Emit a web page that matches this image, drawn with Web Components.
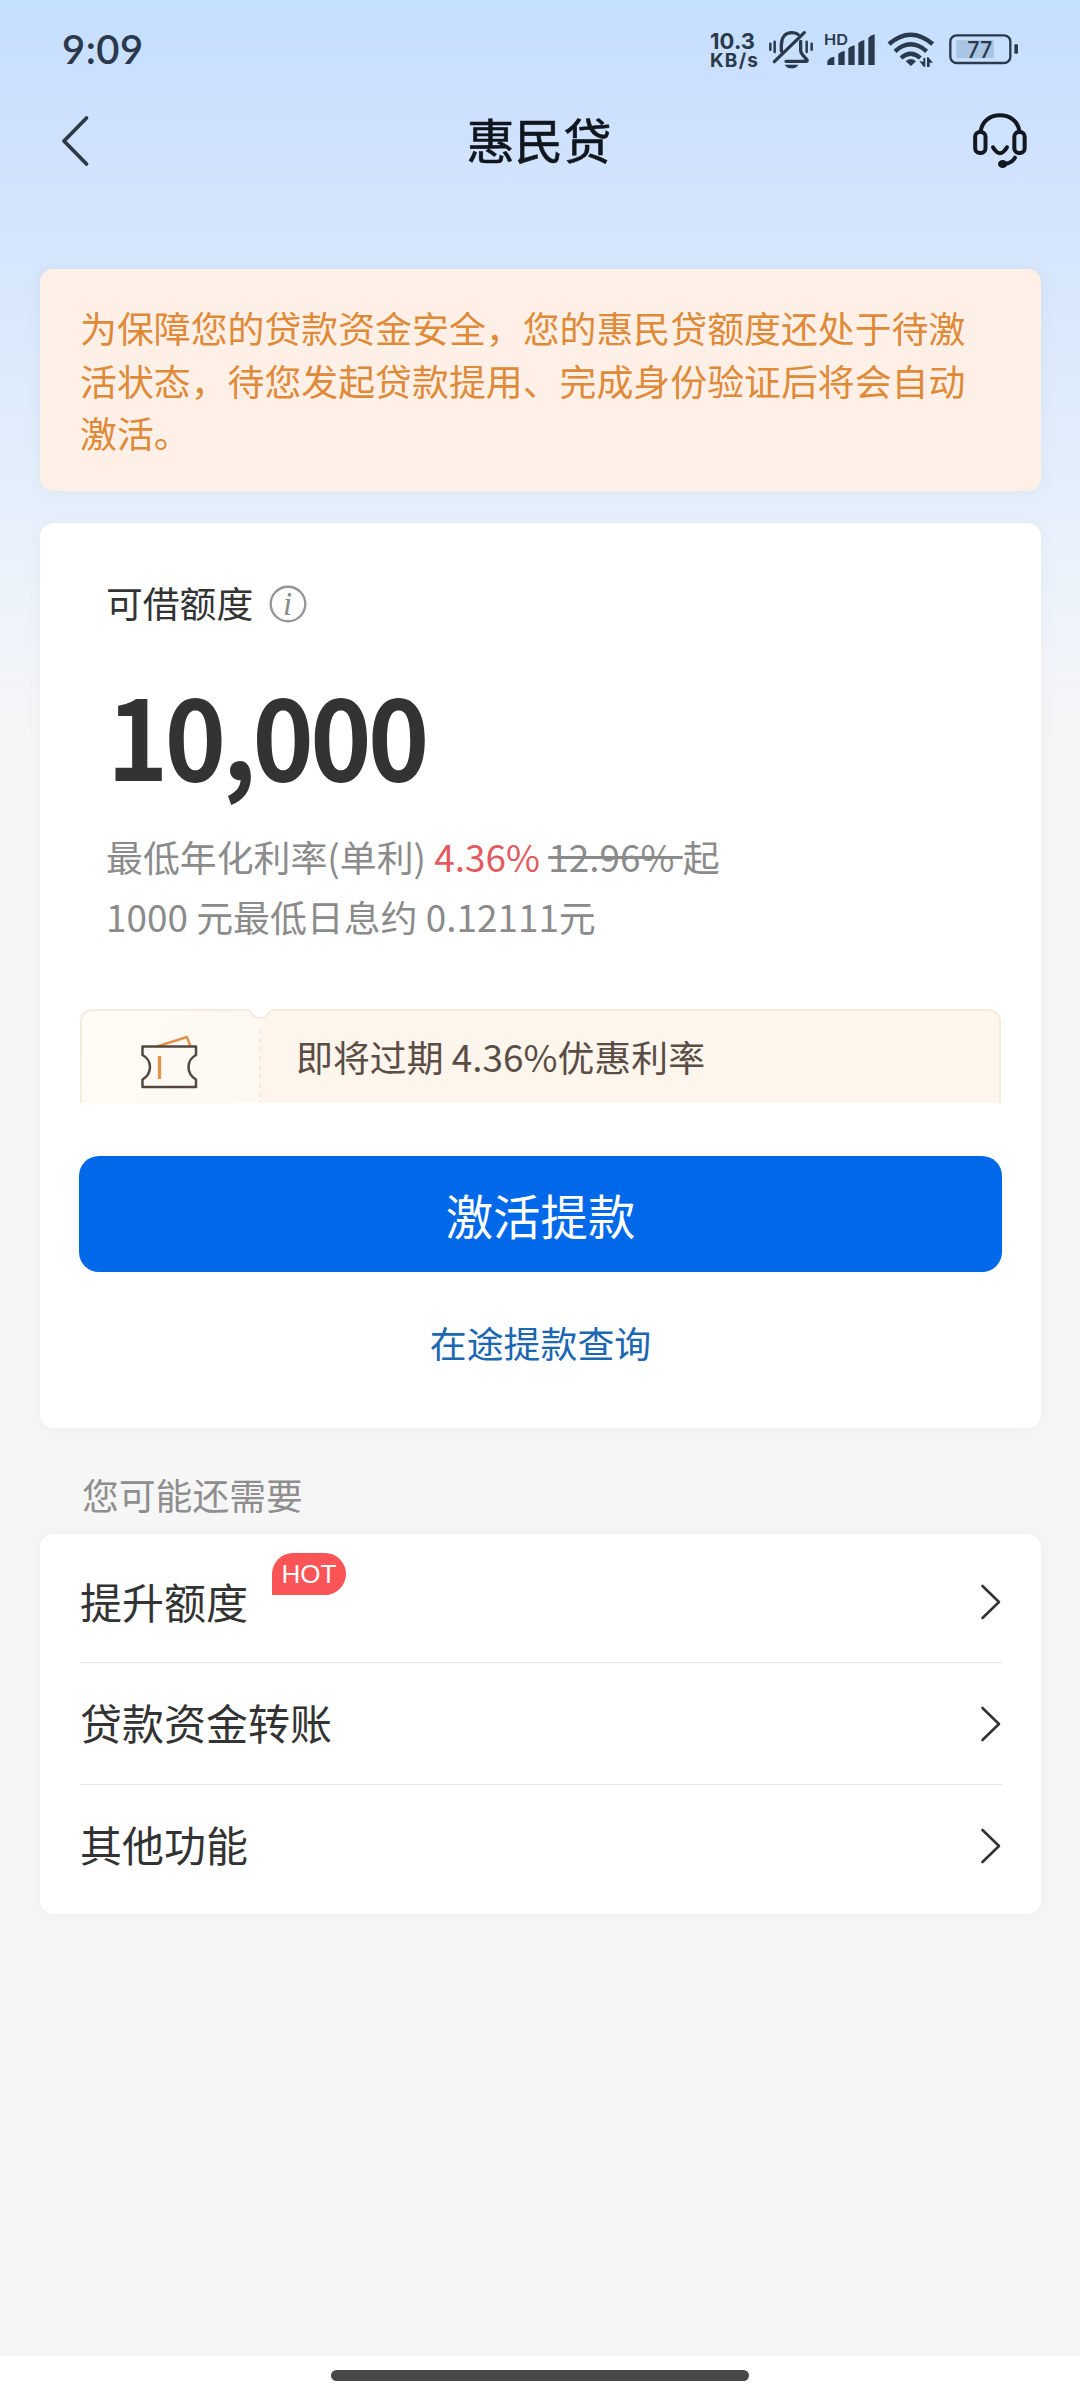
<!DOCTYPE html>
<html lang="zh-CN">
<head>
<meta charset="utf-8">
<meta name="viewport" content="width=device-width">
<title>惠民贷</title>
<style>
html,body{margin:0;padding:0}
body{width:1080px;height:2400px;overflow:hidden;background:#f6f6f6;font-family:"Noto Sans CJK SC","Noto Sans",sans-serif;color:#333}
</style>
</head>
<body>
<loan-page></loan-page>
<script>
const define = (name, html) => customElements.define(name, class extends HTMLElement {
  constructor() {
    super();
    const t = document.createElement('template');
    t.innerHTML = html;
    this.attachShadow({mode: 'open'}).appendChild(t.content.cloneNode(true));
  }
});

define('status-bar', `<style>
:host{display:flex;box-sizing:border-box;height:98px;padding:0 61px 0 62px;justify-content:space-between;align-items:flex-start;color:#2a394b;font-family:Lato,sans-serif}
.time{font-size:40px;line-height:40px;font-weight:600;margin-top:29px;letter-spacing:.5px}
.right{display:flex;align-items:flex-start;margin-top:30px}
.net{width:57px;display:flex;flex-direction:column;font-family:Inter,sans-serif;font-weight:650}
.net span{white-space:nowrap}
.a{font-size:22px;line-height:22px;letter-spacing:.1px}
.b{font-size:19px;line-height:18px;letter-spacing:1.200px}
svg{display:block;flex:none}
text{font-family:Inter,sans-serif}
</style>
<div class="time">9:09</div>
<div class="right">
<div class="net"><span class="a">10.3</span><span class="b">KB/s</span></div>
<svg width="56" height="40" viewBox="261 90 168 120" fill="none" stroke="#2a394b" stroke-width="10" stroke-linecap="round"><path d="M304 153V136C304 110 317 98 335 98q11 0 19 5M362 124v27q0 8 6 14l13 15q2 4-3 4H318M283 185 373 98"/><path d="M314 194h41q-5 11-20 11t-21-11z" fill="#2a394b" stroke="none"/><path stroke-width="7.500" d="M271 131v18M284 125v31M380 125v31M395 131v18"/></svg>
<svg width="62" height="40" viewBox="429 90 186 120" fill="#2a394b"><text x="432" y="134" font-size="44" font-weight="600" textLength="72" lengthAdjust="spacingAndGlyphs">HD</text><path d="M442 195v-12q5-11 21-13v25zM475 195v-34q7-6 19-9v43zM505 195v-50q8-7 19-9v59zM535 195v-66q8-7 18-9v75zM565 195v-82q8-7 19-10v92z"/></svg>
<svg width="60" height="40" viewBox="615 90 180 120" fill="none" stroke="#2a394b" stroke-width="13"><path d="M627 132Q692 76 758 132M645 154Q692 112 740 154M663 174Q692 148 721 174"/><path fill="#2a394b" stroke="none" d="M677 184q15-14 31 0l-15 14zM718 183l13 17h5v-26h-6v11zM741 201v-29h4l14 16h-10v13z"/></svg>
<svg width="74" height="40" viewBox="795 90 222 120"><rect x="811" y="106" width="180" height="83" rx="19" fill="none" stroke="#2a394b" stroke-width="7"/><rect x="829" y="121" width="113" height="54" rx="4" fill="#a9c5e3"/><rect x="1003" y="133" width="11" height="28" rx="3" fill="#2a394b"/><text x="862" y="173" font-size="68" font-weight="500" fill="#2a394b" textLength="75" lengthAdjust="spacingAndGlyphs">77</text></svg>
</div>`);

define('nav-bar', `<style>
:host{display:flex;height:86px;padding:0 49px 0 59px;justify-content:space-between;align-items:center}
.t{font-size:48.300px;line-height:70px;font-weight:400;-webkit-text-stroke:.6px #10161d;color:#10161d;margin:-7px 12px 0 0}
.side{width:60px;display:flex}
.r{justify-content:flex-end}
svg{display:block}
</style>
<div class="side"><svg width="34" height="54" viewBox="0 0 34 54" fill="none" stroke="#2c3a45" stroke-width="3.800" stroke-linecap="round"><path d="M27.500 4 5 27 27.500 50" stroke-linejoin="round"/></svg></div>
<div class="t">惠民贷</div>
<div class="side r"><svg width="60" height="60" viewBox="875 331 180 180" fill="none" stroke="#111820" stroke-width="12" stroke-linecap="round"><path d="M904 390C910 359 934 344 962 344s52 15 58 46"/><rect x="887.500" y="394" width="31" height="63" rx="14"/><rect x="1005" y="394" width="31" height="63" rx="14"/><path d="M941 440q21 36 42 0M1007 471q-9 15-27 18"/><ellipse cx="970" cy="490" rx="14" ry="12" fill="#111820" stroke="none"/></svg></div>`);

define('notice-card', `<style>
:host{display:block;box-sizing:border-box;height:222px;margin:0 39px 0 40px;padding:32px 60px 0 40px;border-radius:13px;background:#fef0e6;color:#df8a38;font-size:36.900px;line-height:52.700px;box-shadow:0 0 14px rgba(120,120,130,.07)}
</style><slot></slot>`);

define('panel-card', `<style>
:host{display:block;box-sizing:border-box;margin:0 39px 0 40px;background:#fff;border-radius:14px;box-shadow:0 0 14px rgba(90,90,100,.05)}
</style><slot></slot>`);

define('credit-summary', `<style>
:host{display:flex;flex-direction:column;padding:51px 66px 0}
.h{display:flex;align-items:center;gap:16px;font-size:36.800px;line-height:56px;color:#333}
.h svg{margin-top:4px}
.amt{font-size:110px;line-height:120px;font-weight:700;color:#333;margin-top:43px;letter-spacing:-3.800px;transform:scaleX(.945);transform-origin:0 0;padding-left:1px}
.rate{font-size:36.900px;line-height:60px;color:#8b8b8b;margin-top:33px;white-space:pre}
b{font-weight:400;color:#e25b5f}
s{text-decoration-thickness:3px}
svg{display:block}
</style>
<div class="h"><span>可借额度</span><svg width="38" height="38" viewBox="0 0 38 38"><circle cx="19" cy="19" r="17.300" fill="none" stroke="#969696" stroke-width="2.400"/><text x="18.500" y="29.500" text-anchor="middle" font-family="Liberation Serif,serif" font-style="italic" font-size="33" fill="#8b8b8b">i</text></svg></div>
<div class="amt">10,000</div>
<div class="rate"><div>最低年化利率(单利) <b>4.36%</b> <s>12.96% </s>起</div><div>1000 元最低日息约 0.12111元</div></div>`);

define('coupon-strip', `<style>
:host{display:flex;height:94px;margin:63.500px 40px 0 40px;overflow:hidden}
.l,.r{box-sizing:border-box;height:120px;border:2px solid #f7ebdd}
.l{background:linear-gradient(100deg,#fffbf5,#fef8f1);border-right:0;border-radius:12px 0 0 0;display:flex;justify-content:center;padding:23px 4px 0 0}
.r{background:#fef5ec;border-left:0;border-radius:0 12px 0 0;padding:15px 0 0 36px;font-size:36.900px;line-height:60px;color:#5a4d45;white-space:nowrap}
.wrap{display:grid;flex:1;grid-template-columns:180px 1fr}
.wrap>*{grid-row:1}
.cut{grid-column:1/3;justify-self:start;z-index:1;display:block}
.l{grid-column:1}.r{grid-column:2}
</style>
<div class="wrap">
<div class="l"><svg width="60" height="60" viewBox="0 0 60 60" fill="none" stroke-linejoin="round"><path d="M18 12.500 48 3l3.500 9.500" stroke="#e2924c" stroke-width="2.400"/><path d="M3.500 12.500H57V21Q49.500 25 49.500 33T57 45.500V53H3.500V45.500Q11 41 11 33T3.500 21Z" stroke="#52483f" stroke-width="2.500"/><path d="M20.500 22v23" stroke="#e2924c" stroke-width="3.300"/></svg></div>
<div class="r">即将过期 4.36%优惠利率</div>
<svg class="cut" width="200" height="94"><path d="M167-2C170 1 172 9 180 9S190 1 193-2Z" fill="#fff" stroke="#f7ebdd" stroke-width="2"/><path d="M169 -1h22v2.500h-20z" fill="#fff"/><path d="M180 20V94" stroke="#f5e9dd" stroke-width="2" stroke-dasharray="5 4"/></svg>
</div>`);

define('primary-button', `<style>
:host{display:flex;box-sizing:border-box;height:116px;margin:53px 39px 0 39px;padding-top:1px;align-items:center;justify-content:center;border-radius:20px;background:#0068e9;color:#fff;font-size:47.400px;line-height:70px}
</style><slot></slot>`);

define('text-link', `<style>
:host{display:block;text-align:center;margin-top:40px;font-size:36.900px;line-height:60px;color:#1c67b2}
</style><slot></slot>`);

define('section-label', `<style>
:host{display:block;padding:36px 82px 0;height:70px;font-size:36.800px;line-height:60px;color:#8e8e8e}
</style><slot></slot>`);

define('menu-row', `<style>
:host{display:flex;box-sizing:border-box;margin:0 39px 0 40px;height:122px;align-items:center;justify-content:space-between;border-bottom:1.500px solid #e6e6e6;font-size:42px;line-height:60px;color:#333;padding-top:1px}
:host([first]){height:129px;padding-top:9px}
:host([last]){border:0;padding-top:0}
.l{display:flex;gap:24px;margin-top:-3px}
svg{display:block}
::slotted(hot-badge){margin-top:-18px}
</style><div class="l"><slot></slot><slot name="badge"></slot></div><svg width="22" height="38" viewBox="0 0 22 38" fill="none" stroke="#333" stroke-width="2.600" stroke-linecap="round" stroke-linejoin="round"><path d="M2.500 3 19 19 2.500 35"/></svg>`);

define('hot-badge', `<style>
:host{display:flex;width:74px;height:42px;align-items:center;justify-content:center;background:#fb5457;color:#fff;border-radius:21px 21px 21px 0;font:26px/42px "Liberation Sans",sans-serif}
</style><slot></slot>`);

define('home-indicator', `<style>
:host{display:flex;height:44px;background:#fff;justify-content:center;margin-top:auto}
div{width:418px;height:11px;margin-top:14px;border-radius:6px;background:#484848}
</style><div></div>`);

define('loan-page', `<style>
:host{display:flex;flex-direction:column;height:2400px;background:linear-gradient(180deg,#c5dfff 0,#cce0fe 100px,#d4e4fb 220px,#dae9fc 330px,#e5effb 500px,#f0f4fa 640px,#f6f6f6 750px)}
notice-card{margin-top:85px}
.main{height:905px;margin-top:31.500px}
.menu{height:380px}
</style>
<status-bar></status-bar>
<nav-bar></nav-bar>
<notice-card>为保障您的贷款资金安全，您的惠民贷额度还处于待激活状态，待您发起贷款提用、完成身份验证后将会自动激活。</notice-card>
<panel-card class="main">
<credit-summary></credit-summary>
<coupon-strip></coupon-strip>
<primary-button>激活提款</primary-button>
<text-link>在途提款查询</text-link>
</panel-card>
<section-label>您可能还需要</section-label>
<panel-card class="menu">
<menu-row first>提升额度<hot-badge slot="badge">HOT</hot-badge></menu-row>
<menu-row>贷款资金转账</menu-row>
<menu-row last>其他功能</menu-row>
</panel-card>
<home-indicator></home-indicator>`);
</script>
</body>
</html>
